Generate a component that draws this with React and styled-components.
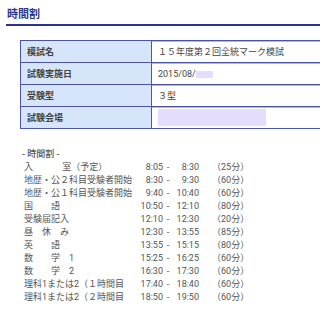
import styled, { createGlobalStyle } from 'styled-components'

const Global = createGlobalStyle`
  body {
    margin: 0;
    background: #fff;
    overflow: hidden;
    font-family: Roboto, "Noto Sans CJK JP", sans-serif;
  }
`

const Page = styled.div`
  width: 320px;
  height: 315px;
  overflow: hidden;
`

const Title = styled.h1`
  margin: 0 0 0 6px;
  padding: 8px 0 2px 1px;
  font-size: 11px;
  line-height: 14px;
  font-weight: bold;
  color: #2d3a8c;
  border-bottom: 2px solid #2b3492;
`

const InfoTable = styled.table`
  margin: 14px 0 0 20px;
  width: 330px;
  border-collapse: collapse;
  border-left: 1px solid #4d56a8;
  border-bottom: 1px solid #4d56a8;
  font-size: 9px;
  color: #333;
`

const Row = styled.tr`
  height: 22px;
  border-top: 1px solid #4a52a6;
  box-shadow: inset 0 1px 0 #b5b8de;
`

const Label = styled.th`
  width: 118px;
  padding: 0 6px;
  text-align: left;
  font-weight: bold;
  color: #444;
  background: #d6e5fa;
  border-right: 1px solid #4d56a8;
`

const Value = styled.td`
  padding: 0 6px;
  text-align: left;
  color: #444;
`

const Mask = styled.span`
  display: inline-block;
  vertical-align: middle;
  width: ${p => p.w}px;
  height: ${p => p.h}px;
  background: #e6dcfb;
`

const Schedule = styled.div`
  margin: 19px 0 0 22px;
  font-size: 9px;
  color: #555;
`

const Heading = styled.div`
  line-height: 13px;
  font-weight: 500;
  color: #555;
`

const Grid = styled.div`
  display: grid;
  grid-template-columns: 114px 25px 10px 26px auto;
  padding-left: 2px;
  line-height: 13px;
  white-space: pre;
`

const Start = styled.span`
  text-align: right;
`

const Dash = styled.span`
  text-align: center;
`

const End = styled.span`
  text-align: right;
`

const Dur = styled.span`
  padding-left: 13px;
`

const info = [
  ['模試名', '１５年度第２回全統マーク模試'],
  ['試験実施日', 'date'],
  ['受験型', '３型'],
  ['試験会場', 'place'],
]

const rows = [
  ['入　　　 室（予定）', '8:05', '8:30', '25'],
  ['地歴・公２科目受験者開始', '8:30', '9:30', '60'],
  ['地歴・公１科目受験者開始', '9:40', '10:40', '60'],
  ['国　　語', '10:50', '12:10', '80'],
  ['受験届記入', '12:10', '12:30', '20'],
  ['昼　休　み', '12:30', '13:55', '85'],
  ['英　　語', '13:55', '15:15', '80'],
  ['数　　学　1', '15:25', '16:25', '60'],
  ['数　　学　2', '16:30', '17:30', '60'],
  ['理科1または2（１時間目', '17:40', '18:40', '60'],
  ['理科1または2（２時間目', '18:50', '19:50', '60'],
]

export default function App() {
  return (
    <Page>
      <Global />
      <Title>時間割</Title>
      <InfoTable>
        <tbody>
          {info.map(([k, v]) => (
            <Row key={k}>
              <Label>{k}</Label>
              <Value>
                {v === 'date' ? (
                  <>2015/08/<Mask w={17} h={7} /></>
                ) : v === 'place' ? (
                  <Mask w={108} h={17} />
                ) : v}
              </Value>
            </Row>
          ))}
        </tbody>
      </InfoTable>
      <Schedule>
        <Heading>- 時間割 -</Heading>
        <Grid>
          {rows.map(([name, s, e, d]) => (
            <>
              <span key={name}>{name}</span>
              <Start>{s}</Start>
              <Dash>-</Dash>
              <End>{e}</End>
              <Dur>（{d}分）</Dur>
            </>
          ))}
        </Grid>
      </Schedule>
    </Page>
  )
}
